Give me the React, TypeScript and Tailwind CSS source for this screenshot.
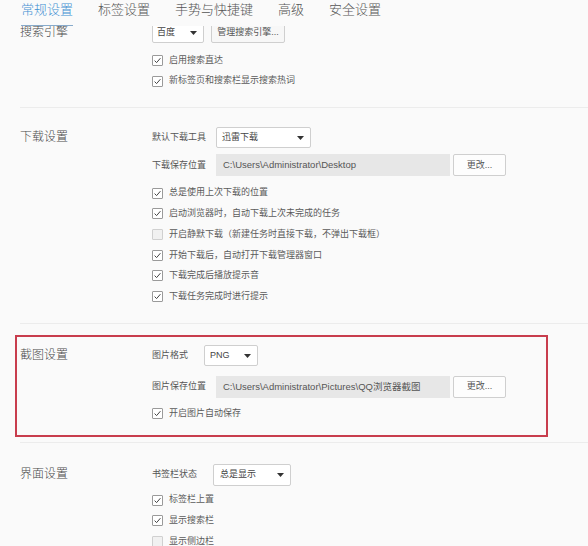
import React from 'react'

const tabs = ['常规设置', '标签设置', '手势与快捷键', '高级', '安全设置']

function Caret() {
  return (
    <svg width="7" height="4" viewBox="0 0 7 4" className="shrink-0">
      <path d="M0 0 L7 0 L3.5 4 Z" fill="#333" />
    </svg>
  )
}

function Check({ label, checked = true }: { label: string; checked?: boolean }) {
  return (
    <div className="h-[20.7px] flex items-center">
      <span
        className={`w-[11px] h-[11px] rounded-[1px] border flex items-center justify-center shrink-0 ${
          checked ? 'border-[#9a9a9a] bg-white' : 'border-[#d0d0d0] bg-[#f1f1f1]'
        }`}
      >
        {checked && (
          <svg width="9" height="9" viewBox="0 0 9 9">
            <path d="M1.6 4.6 L3.6 6.6 L7.4 2.2" fill="none" stroke="#444" strokeWidth="1" />
          </svg>
        )}
      </span>
      <span className="ml-[6px] text-[9px] text-[#5a5a5a] whitespace-nowrap">{label}</span>
    </div>
  )
}

function Section({ title, className, children }: { title: string; className: string; children: React.ReactNode }) {
  return (
    <div className={`relative flex border-b border-[#ececec] ${className}`}>
      <div className="w-[132px] shrink-0 text-[12px] leading-[21px] font-light text-[#4a4a4a]">{title}</div>
      <div className="flex flex-col">{children}</div>
    </div>
  )
}

function PathRow({ label, path }: { label: string; path: string }) {
  return (
    <div className="h-[22px] flex items-center">
      <span className="w-[64px] shrink-0 text-[9px] text-[#555]">{label}</span>
      <div className="w-[234px] h-[22px] bg-[#e7e7e7] pl-[7px] flex items-center text-[9.5px] text-[#555] whitespace-nowrap">
        {path}
      </div>
      <button className="ml-[3px] w-[53px] h-[22px] border border-[#cfcfcf] rounded-[2px] bg-[#fdfdfd] text-[9px] text-[#555]">
        更改...
      </button>
    </div>
  )
}

export default function App() {
  return (
    <div className="w-[588px] h-[546px] overflow-hidden bg-[#fafafa] font-['Liberation_Sans','Noto_Sans_CJK_SC',sans-serif]">
      <div className="h-[26px] flex pl-[21px] gap-[25px] relative z-10 bg-[#fafafa]">
        {tabs.map((t, i) => (
          <div
            key={t}
            className={`h-[26px] text-[13px] leading-[20px] font-light ${
              i === 0 ? 'text-[#3f8fd2] border-b border-[#88abcb]' : 'text-[#555]'
            }`}
          >
            {t}
          </div>
        ))}
      </div>

      <div className="h-[520px] overflow-hidden">
        <div className="mt-[-4px] pl-[20px]">
          <Section title="搜索引擎" className="pb-[16px]">
            <div className="h-[21px] flex items-center">
              <div className="w-[52px] h-[21px] bg-white border border-[#cfcfcf] rounded-[2px] flex items-center justify-between pl-[4px] pr-[6px] text-[9px] text-[#444]">
                百度
                <Caret />
              </div>
              <button className="ml-[7px] w-[74px] h-[21px] border border-[#cfcfcf] rounded-[2px] bg-[#f7f7f7] text-[9px] text-[#555]">
                管理搜索引擎...
              </button>
            </div>
            <div className="mt-[7px]">
              <Check label="启用搜索直达" />
              <Check label="新标签页和搜索栏显示搜索热词" />
            </div>
          </Section>

          <Section title="下载设置" className="pt-[19px] pb-[16px]">
            <div className="h-[21px] flex items-center">
              <span className="w-[64px] shrink-0 text-[9px] text-[#555]">默认下载工具</span>
              <div className="w-[95px] h-[21px] bg-white border border-[#cfcfcf] rounded-[2px] flex items-center justify-between pl-[5px] pr-[6px] text-[9px] text-[#444]">
                迅雷下载
                <Caret />
              </div>
            </div>
            <div className="mt-[6px]">
              <PathRow label="下载保存位置" path="C:\Users\Administrator\Desktop" />
            </div>
            <div className="mt-[6.5px]">
              <Check label="总是使用上次下载的位置" />
              <Check label="启动浏览器时，自动下载上次未完成的任务" />
              <Check label="开启静默下载（新建任务时直接下载，不弹出下载框）" checked={false} />
              <Check label="开始下载后，自动打开下载管理器窗口" />
              <Check label="下载完成后播放提示音" />
              <Check label="下载任务完成时进行提示" />
            </div>
          </Section>

          <Section title="截图设置" className="pt-[21px] pb-[18.5px]">
            <div className="h-[21px] flex items-center">
              <span className="w-[52px] shrink-0 text-[9px] text-[#555]">图片格式</span>
              <div className="w-[54px] h-[21px] bg-white border border-[#cfcfcf] rounded-[2px] flex items-center justify-between pl-[5px] pr-[6px] text-[9px] text-[#444]">
                PNG
                <Caret />
              </div>
            </div>
            <div className="mt-[10px]">
              <PathRow label="图片保存位置" path="C:\Users\Administrator\Pictures\QQ浏览器截图" />
            </div>
            <div className="mt-[5px]">
              <Check label="开启图片自动保存" />
            </div>
            <div className="absolute left-[-5px] right-[40px] top-[11px] bottom-[5px] border-2 border-[#c83d4d] pointer-events-none" />
          </Section>

          <Section title="界面设置" className="pt-[21px] pb-[16px]">
            <div className="h-[21px] flex items-center">
              <span className="w-[61px] shrink-0 text-[9px] text-[#555]">书签栏状态</span>
              <div className="w-[78px] h-[22px] bg-white border border-[#cfcfcf] rounded-[2px] flex items-center justify-between pl-[6px] pr-[6px] text-[9px] text-[#444]">
                总是显示
                <Caret />
              </div>
            </div>
            <div className="mt-[4.5px]">
              <Check label="标签栏上置" />
              <Check label="显示搜索栏" />
              <Check label="显示侧边栏" checked={false} />
            </div>
          </Section>
        </div>
      </div>
    </div>
  )
}
